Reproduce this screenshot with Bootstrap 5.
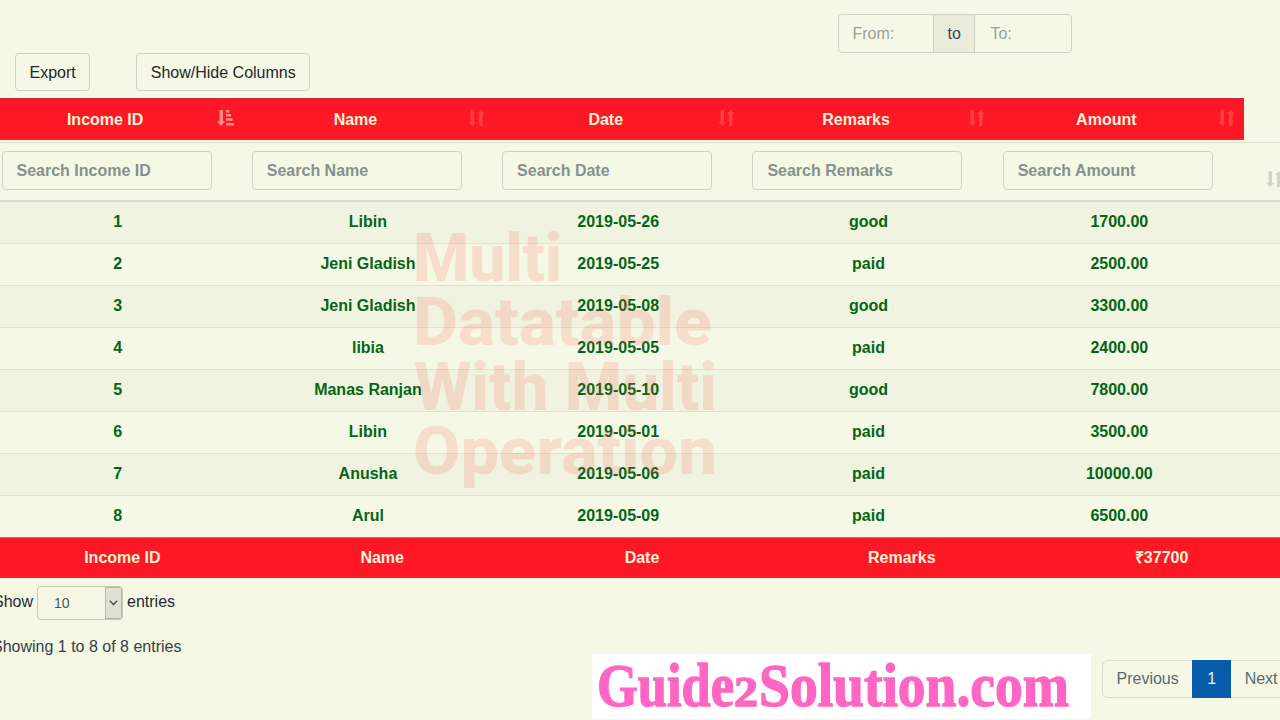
<!DOCTYPE html>
<html lang="en">
<head>
<meta charset="utf-8">
<title>Multi Datatable</title>
<link href="https://cdn.jsdelivr.net/npm/bootstrap@5.3.0/dist/css/bootstrap.min.css" rel="stylesheet">
<style>
  html, body { overflow: hidden; }
  body { width: 1280px; height: 720px; background: #f5f8e4; font: 16px/24px "Liberation Sans", Arial, sans-serif; color: #1d2a33; }
  .toolbar-area { height: 98px; padding: 14px 208px 0 15px; }
  .range-group { width: 234px; height: 39px; }
  .range-group .form-control, .range-group .input-group-text, .search-box { border: 1px solid #cfd2c0; background: transparent; font-size: 16px; padding: 6px 14px; box-shadow: none; border-radius: 4px; }
  .range-group .form-control:first-child { padding-left: 13.5px; }
  .range-group .form-control:last-child { padding-left: 15px; }
  .range-group .input-group-text { background: #e9ecd9; color: #36435a; padding: 6px 13.5px; }
  .range-group .form-control::placeholder { color: #9ba297; opacity: 1; }
  .btn-tool { height: 38px; border: 1px solid #cfd2c0; color: #1c2730; padding: 7px 13.5px 5px; line-height: 24px; border-radius: 4px; white-space: nowrap; }
  .head-row { width: 1255px; margin-left: -11px; height: 42px; background: #fe1825; color: #fdf2d6; border-top: 1px solid #cf2338; border-bottom: 1px solid #d5364a; }
  .grid-row { display: grid; grid-template-columns: repeat(5, 250.3px); align-items: center; font-weight: 700; text-align: center; }
  .head-row > div { position: relative; padding: 2px 30px 0 12px; }
  .head-row svg { position: absolute; right: 5px; top: 3px; }
  .filter-row { margin-left: -11px; height: 60px; margin-top: 2px; border-top: 1px solid #e0e3d1; border-bottom: 2px solid #dbdecd; grid-template-columns: repeat(5, 250.3px) 50px; padding-bottom: 2px; }
  .search-box { width: 210px; height: 39px; margin-left: 12.5px; font-weight: 700; }
  .search-box::placeholder { color: #879090; opacity: 1; }
  .body-rows { margin-left: -7.5px; margin-top: -1.500px; width: 1300px; }
  .body-rows .grid-row { height: 42.05px; color: #04651a; border-top: 1px solid #dfe2d1; }
  .body-rows .grid-row > div:last-child { padding-left: 1px; }
  .body-rows .grid-row:nth-child(odd) { background: #f0f3df; }
  .body-rows .grid-row:first-child { border-top-color: #dbdecd; }
  .foot-row { grid-template-columns: repeat(5, 259.8px); margin-left: -7.5px; height: 41px; background: #fe1825; color: #fdf2d6; border-top: 1px solid #ec5962; }
  .length-box { width: 86px; height: 34px; border: 1px solid #c6c9b8; border-radius: 4px; font-size: 14px; color: #4b555c; overflow: hidden; }
  .length-arrow { width: 17px; background: #dfe1d0; border: 1px solid #b4b8ab; }
  .brand-box { width: 499px; height: 65px; background: #fff; }
  .pagination .page-link { font-size: 16px; line-height: 24px; padding: 6px 13.5px; color: #5d6871; background: transparent; border-color: #dadcca; white-space: nowrap; }
  .pagination .active .page-link { background: #085dab; border-color: #085dab; color: #e7f5e3; padding: 6px 14px; }
  .watermark { left: 400px; top: 215px; pointer-events: none; }
</style>
</head>
<body>
<svg width="0" height="0" class="position-absolute">
  <symbol id="sort-both" viewBox="0 0 17 18"><path d="M2.500 1h3.500v12h2L4.250 17 .5 13h2zM11 17h3.500V5h2L12.750 1 9 5h2z"/></symbol>
  <symbol id="sort-asc" viewBox="0 0 17 18"><path d="M2.500 1H6v11.500h2l-4 4.500-4-4.500h2.500zM9 1h3.500v2.500H9zM9 5h5v2.500H9zM9 9.300h6.500v2.500H9zM9 14h8v2.500H9z"/></symbol>
</svg>
<header class="toolbar-area">
  <div class="input-group range-group ms-auto flex-nowrap">
    <input class="form-control" placeholder="From:" aria-label="From"><span class="input-group-text">to</span><input class="form-control" placeholder="To:" aria-label="To">
  </div>
  <div class="d-flex">
    <button class="btn btn-tool">Export</button>
    <button class="btn btn-tool" style="margin-left:46px">Show/Hide Columns</button>
  </div>
</header>
<main>
  <div class="grid-row head-row">
    <div>Income ID<svg width="17" height="18" fill="#ff8f86"><use href="#sort-asc"/></svg></div>
    <div>Name<svg width="17" height="18" fill="#ff4046"><use href="#sort-both"/></svg></div>
    <div>Date<svg width="17" height="18" fill="#ff4046"><use href="#sort-both"/></svg></div>
    <div>Remarks<svg width="17" height="18" fill="#ff4046"><use href="#sort-both"/></svg></div>
    <div>Amount<svg width="17" height="18" fill="#ff4046"><use href="#sort-both"/></svg></div>
  </div>
  <div class="grid-row filter-row">
    <input class="form-control search-box" placeholder="Search Income ID">
    <input class="form-control search-box" placeholder="Search Name">
    <input class="form-control search-box" placeholder="Search Date">
    <input class="form-control search-box" placeholder="Search Remarks">
    <input class="form-control search-box" placeholder="Search Amount">
    <svg class="mt-3" style="margin-left:26px" width="17" height="18" fill="#d2d5c3"><use href="#sort-both"/></svg>
  </div>
  <div class="body-rows">
    <div class="grid-row"><div>1</div><div>Libin</div><div>2019-05-26</div><div>good</div><div>1700.00</div></div>
    <div class="grid-row"><div>2</div><div>Jeni Gladish</div><div>2019-05-25</div><div>paid</div><div>2500.00</div></div>
    <div class="grid-row"><div>3</div><div>Jeni Gladish</div><div>2019-05-08</div><div>good</div><div>3300.00</div></div>
    <div class="grid-row"><div>4</div><div>libia</div><div>2019-05-05</div><div>paid</div><div>2400.00</div></div>
    <div class="grid-row"><div>5</div><div>Manas Ranjan</div><div>2019-05-10</div><div>good</div><div>7800.00</div></div>
    <div class="grid-row"><div>6</div><div>Libin</div><div>2019-05-01</div><div>paid</div><div>3500.00</div></div>
    <div class="grid-row"><div>7</div><div>Anusha</div><div>2019-05-06</div><div>paid</div><div>10000.00</div></div>
    <div class="grid-row"><div>8</div><div>Arul</div><div>2019-05-09</div><div>paid</div><div>6500.00</div></div>
  </div>
  <div class="grid-row foot-row"><div>Income ID</div><div>Name</div><div>Date</div><div>Remarks</div><div>₹37700</div></div>
</main>
<footer>
  <div class="d-flex" style="margin:8px 0 0 -7px">
    <span style="padding:4px 4px 0 0">Show</span>
    <div class="length-box d-flex"><span class="flex-grow-1" style="padding:4px 0 0 16px">10</span><span class="length-arrow d-flex align-items-center justify-content-center"><svg width="9" height="6" fill="none" stroke="#414a50" stroke-width="1.300"><path d="M.8.8 4.500 4.500 8.200.8"/></svg></span></div>
    <span style="padding:4px 0 0 4px">entries</span>
  </div>
  <div style="margin:15px 0 0 -8px;height:19px;color:#34404a">Showing 1 to 8 of 8 entries</div>
  <div class="d-flex" style="padding-left:592px">
    <div class="brand-box flex-shrink-0">
      <svg class="d-block" width="499" height="65" font-family="Liberation Serif, serif" font-weight="700" font-size="61" fill="#ff66c4" stroke="#ff66c4" stroke-width="1.400"><text y="52"><tspan x="5" textLength="137" lengthAdjust="spacingAndGlyphs">Guide</tspan><tspan x="142" font-size="43" textLength="24" lengthAdjust="spacingAndGlyphs">2</tspan><tspan x="167" textLength="310" lengthAdjust="spacingAndGlyphs">Solution.com</tspan></text></svg>
    </div>
    <ul class="pagination mb-0 flex-shrink-0" style="margin:6px 0 0 11px">
      <li class="page-item"><a class="page-link" href="#">Previous</a></li>
      <li class="page-item active"><a class="page-link" href="#">1</a></li>
      <li class="page-item"><a class="page-link" href="#">Next</a></li>
    </ul>
  </div>
</footer>
<svg class="watermark position-absolute" width="340" height="290" font-family="Roboto, sans-serif" font-weight="800" font-size="67" fill="#ff4040" fill-opacity=".15">
  <text x="13" y="65.500" textLength="149" lengthAdjust="spacingAndGlyphs">Multi</text>
  <text x="13" y="129.500" textLength="299" lengthAdjust="spacingAndGlyphs">Datatable</text>
  <text x="14" y="194.500" textLength="303" lengthAdjust="spacingAndGlyphs">With Multi</text>
  <text x="13" y="258.500" textLength="304" lengthAdjust="spacingAndGlyphs">Operation</text>
</svg>
<script src="https://cdn.jsdelivr.net/npm/bootstrap@5.3.0/dist/js/bootstrap.bundle.min.js"></script>
</body>
</html>
